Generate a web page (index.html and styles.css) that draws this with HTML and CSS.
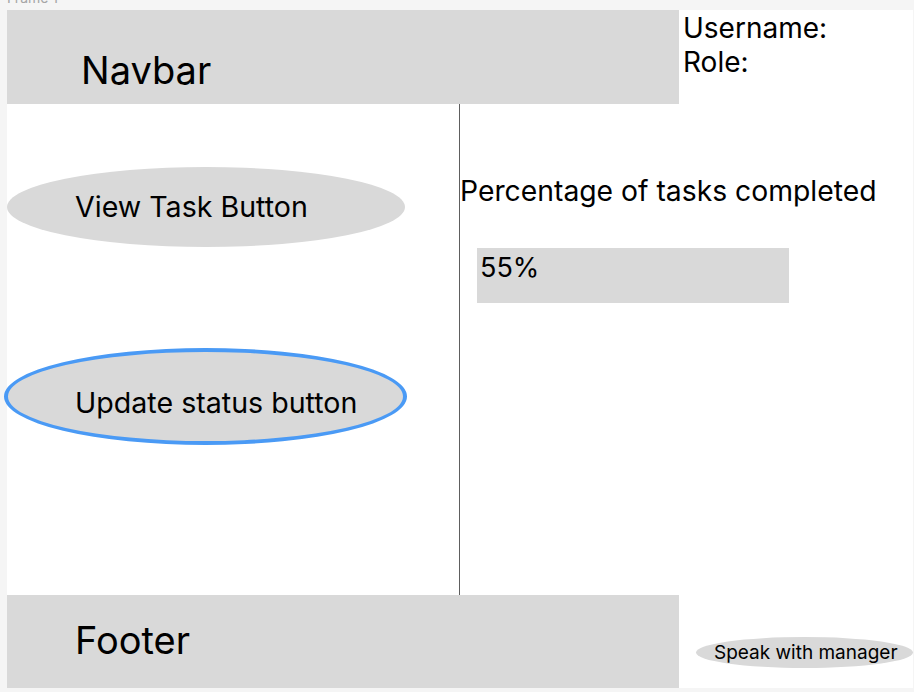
FILE: index.html
```html
<!DOCTYPE html>
<html>
<head>
<meta charset="utf-8">
<link rel="stylesheet" href="styles.css">
</head>
<body>
<div class="frame-label-wrap"><div class="frame-label">Frame 1</div></div>
<div class="frame">
  <div class="navbar">Navbar</div>
  <div class="userinfo">
    <div>Username:</div>
    <div>Role:</div>
  </div>
  <div class="main">
    <div class="left">
      <div class="pill view">View Task Button</div>
      <div class="pill update">Update status button</div>
    </div>
    <div class="right">
      <div class="pct-title">Percentage of tasks completed</div>
      <div class="pct-bar">55%</div>
    </div>
  </div>
  <div class="footer">Footer</div>
  <div class="speak-cell">
    <div class="speak">Speak with manager</div>
  </div>
</div>
</body>
</html>
```

FILE: styles.css
```css
html, body {
  margin: 0;
  padding: 0;
  background: #f5f5f5;
  font-family: "Inter", "Noto Sans", sans-serif;
  color: #000;
}
.frame-label-wrap {
  height: 10px;
  overflow: hidden;
  padding-left: 7px;
}
.frame-label {
  font-size: 14px;
  line-height: 14px;
  margin-top: -9px;
  color: #a6a6a6;
}
.frame {
  margin-left: 7px;
  width: 906px;
  height: 678px;
  background: #fff;
  display: grid;
  grid-template-columns: 672px 234px;
  grid-template-rows: 94px 491px 93px;
}
.navbar {
  background: #d9d9d9;
  font-size: 38px;
  line-height: 46px;
  padding: 37px 0 0 74px;
  box-sizing: border-box;
}
.userinfo {
  padding: 1px 0 0 4px;
  font-size: 28px;
  line-height: 34px;
}
.main {
  grid-column: 1 / span 2;
  display: flex;
}
.left {
  width: 453px;
  border-right: 1px solid #5e5e5e;
  display: flex;
  flex-direction: column;
  align-items: flex-start;
  padding-top: 63px;
  box-sizing: border-box;
}
.pill {
  background: #d9d9d9;
  border-radius: 50%;
  box-sizing: border-box;
  font-size: 28.6px;
  line-height: 34px;
  display: flex;
  align-items: center;
}
.view {
  width: 398px;
  height: 80px;
  padding-left: 68px;
}
.update {
  width: 403px;
  height: 97px;
  border: 4px solid #4a9af5;
  margin-left: -3px;
  margin-top: 101px;
  padding: 12px 0 0 67px;
}
.right {
  flex: 1;
  padding-top: 70px;
}
.pct-title {
  font-size: 28.3px;
  line-height: 34px;
}
.pct-bar {
  margin: 40px 0 0 17px;
  width: 312px;
  height: 55px;
  background: #d9d9d9;
  font-size: 27px;
  line-height: 32px;
  padding: 4px 0 0 3px;
  box-sizing: border-box;
}
.footer {
  background: #d9d9d9;
  font-size: 38px;
  line-height: 46px;
  padding: 22px 0 0 68px;
  box-sizing: border-box;
}
.speak-cell {
  padding: 42px 0 0 17px;
}
.speak {
  width: 217px;
  height: 31px;
  background: #d9d9d9;
  border-radius: 50%;
  font-size: 19px;
  line-height: 23px;
  display: flex;
  align-items: center;
  padding-left: 18px;
  box-sizing: border-box;
}
```
